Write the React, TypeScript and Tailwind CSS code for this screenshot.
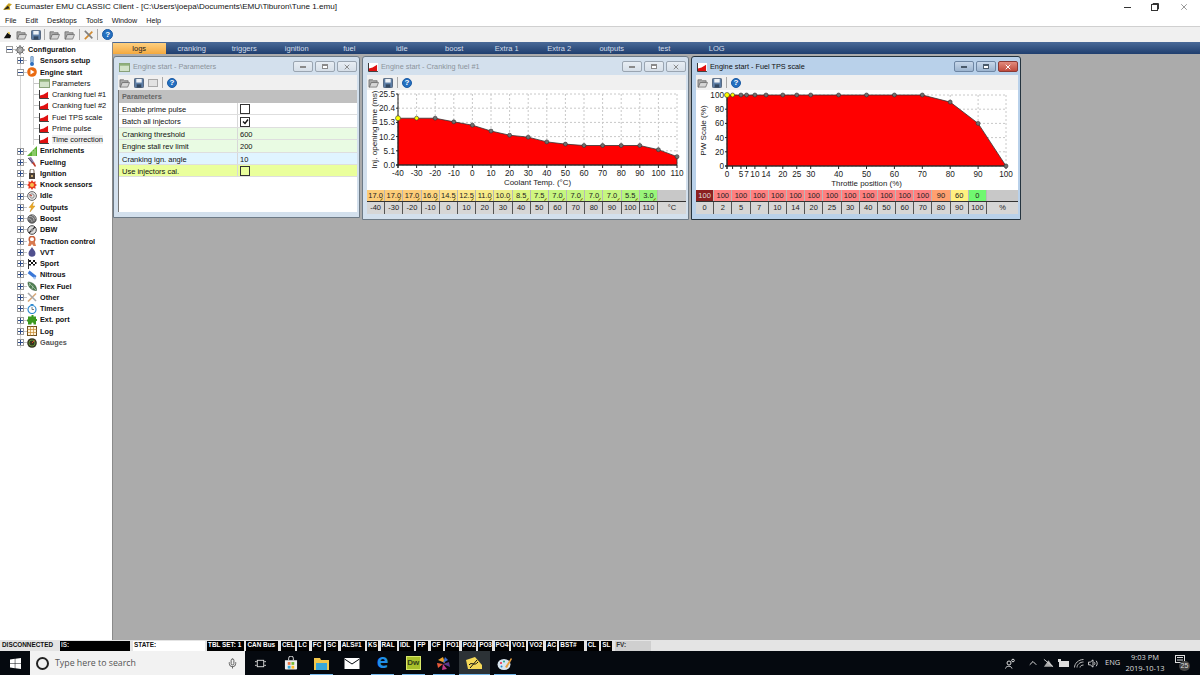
import React from "react";
import { X, ChevronUp, Mic } from "lucide-react";

const F = "font-['Liberation_Sans',Arial,sans-serif]";

function Plus({ open }: { open?: boolean }) {
  return (
    <span className="w-[7px] h-[7px] border border-[#9a9a9a] bg-white flex items-center justify-center shrink-0 relative z-10">
      <span className="absolute w-[5px] h-px bg-[#2a4a8a]" />
      {!open && <span className="absolute h-[5px] w-px bg-[#2a4a8a]" />}
    </span>
  );
}

function Help({ s = 11 }: { s?: number }) {
  return (
    <span style={{ width: s, height: s }} className="rounded-full bg-[#2470c0] border border-[#1c5ba5] text-white flex items-center justify-center text-[8px] font-bold leading-none shrink-0">?</span>
  );
}
function Folder() {
  return (
    <svg width="11" height="10" viewBox="0 0 12 11" className="shrink-0"><path d="M1 2h4l1 1h4v2H4L2 10H1z" fill="#a9a9a9" stroke="#666" strokeWidth=".8"/><path d="M3.500 5H11.500L9.500 10H1.500z" fill="#d6d6d6" stroke="#666" strokeWidth=".8"/></svg>
  );
}
function Disk() {
  return (
    <svg width="10" height="10" viewBox="0 0 11 11" className="shrink-0"><rect x=".5" y=".5" width="10" height="10" rx="1" fill="#5f7fa6" stroke="#4d5f78"/><rect x="2.500" y="1" width="6" height="4" fill="#eef2f6"/><rect x="3" y="7" width="5" height="3.500" fill="#33475f"/></svg>
  );
}
function Sep() {
  return <span className="w-px h-[11px] bg-[#a8a8a8] shrink-0" />;
}
function ChartIco() {
  return (
    <svg width="10" height="9" viewBox="0 0 11 10" className="shrink-0"><rect width="11" height="10" fill="#fff"/><path d="M1 9V6l4-1 5-3v7z" fill="#e01010"/><path d="M.5 0v9.500H11" stroke="#222" fill="none"/></svg>
  );
}
function GridIco() {
  return (
    <svg width="11" height="9" viewBox="0 0 12 10" className="shrink-0"><rect x=".5" y=".5" width="11" height="9" fill="#d2e2c8" stroke="#7f9a6e"/><rect x=".5" y=".5" width="11" height="2.500" fill="#8fb07a"/></svg>
  );
}

const icons: Record<string, React.ReactNode> = {
  Configuration: <><circle cx="5" cy="5" r="3.200" fill="#b8b8b8" stroke="#666"/><circle cx="5" cy="5" r="1.200" fill="#fff" stroke="#666" strokeWidth=".6"/><path d="M5 0v1.800M5 8.200V10M0 5h1.800M8.200 5H10M1.500 1.500l1.200 1.200M7.300 7.300l1.200 1.200M8.500 1.500L7.300 2.700M2.700 7.300L1.500 8.500" stroke="#666"/></>,
  "Sensors setup": <><rect x="3.700" y="0" width="2.600" height="7" rx="1.300" fill="#9fc2e6" stroke="#4d78a8" strokeWidth=".6"/><circle cx="5" cy="8" r="2" fill="#2e6fc0"/></>,
  "Engine start": <><circle cx="5" cy="5" r="4.800" fill="#ea6a10"/><path d="M3.500 2.500L7.500 5l-4 2.500z" fill="#fff"/></>,
  Enrichments: <><path d="M0 10L10 0v10z" fill="#58b030"/><path d="M6 10V5M8 10V3" stroke="#d8f0c0" strokeWidth=".8"/></>,
  Fueling: <><path d="M1 1l3-1 3 5-2 2z" fill="#8a7aa8"/><path d="M5 6l2-1 2 4-1 1z" fill="#c03a2a"/><path d="M1 1l5 5" stroke="#444" strokeWidth=".7"/></>,
  Ignition: <><rect x="2" y="4" width="6" height="6" fill="#4a4038"/><path d="M3 4V2a2 2 0 0 1 4 0v2" fill="none" stroke="#8a7a6a" strokeWidth="1.200"/><rect x="4" y="6" width="2" height="2" fill="#c8a870"/></>,
  "Knock sensors": <><path d="M5 0l1.300 2 2.300-.7-.3 2.400L10 5l-1.700 1.300.3 2.400-2.300-.7L5 10 3.700 8l-2.300.7.3-2.400L0 5l1.700-1.300-.3-2.400 2.300.7z" fill="#e83a20"/><circle cx="5" cy="5" r="2" fill="#f8c050"/></>,
  Idle: <><circle cx="5" cy="5" r="4.400" fill="#e8e8e8" stroke="#666"/><circle cx="5" cy="5" r="2.200" fill="none" stroke="#888"/><path d="M5 5L2.500 3.500" stroke="#c03020"/></>,
  Outputs: <path d="M6.500 0L2 5.500h2.500L3 10l5-6H5.500z" fill="#efa820" stroke="#b88010" strokeWidth=".4"/>,
  Boost: <><circle cx="5" cy="5" r="4.300" fill="#6a6a6a" stroke="#333" strokeWidth=".6"/><path d="M5 1a4 4 0 0 1 3.500 4M2 2.500A4 4 0 0 1 7 7M1 5a3 3 0 0 1 4 3" fill="none" stroke="#ccc" strokeWidth=".7"/></>,
  DBW: <><circle cx="5" cy="5" r="4.300" fill="#e0e0e0" stroke="#444"/><path d="M2 8l6-6" stroke="#333" strokeWidth="1.300"/><circle cx="5" cy="5" r="1.500" fill="#888"/></>,
  "Traction control": <><circle cx="5" cy="3.200" r="2.800" fill="none" stroke="#c8603a" strokeWidth="1.500"/><path d="M2.500 5L1 10h2.500L5 8l1.500 2H9L7.500 5z" fill="#d87a50"/></>,
  VVT: <path d="M5 0c.8 2 3.500 3.800 3.500 6.300a3.500 3.500 0 0 1-7 0C1.500 3.800 4.200 2 5 0z" fill="#50508e"/>,
  Sport: <><path d="M1.500 0v10" stroke="#333"/><rect x="2" y="1" width="7.500" height="5.500" fill="#fff"/><path d="M2 1h2v2H2zM6 1h2v2H6zM4 3h2v2H4zM8 3h1.500v2H8zM2 5h2v1.500H2zM6 5h2v1.500H6z" fill="#111"/></>,
  Nitrous: <><path d="M2.500 0.500l7 5.500-1.800 2.800-7-5.500z" fill="#3a78d8"/><path d="M7 6.500l2 1.500-1 1.800-2-1.500z" fill="#a8c8f0"/></>,
  "Flex Fuel": <><path d="M1 1c5 0 9 4 8.500 8.500C5 10 .5 6 1 1z" fill="#4e8050" stroke="#2a4a2e" strokeWidth=".5"/><path d="M1.500 1.500l7.500 7.500M3 2l-.5 3M6 4.500L5 8" stroke="#c8d8c8" strokeWidth=".6"/></>,
  Other: <><path d="M1 9.500l8-8" stroke="#d8a878" strokeWidth="1.600"/><path d="M1 1l8 8" stroke="#a8a8a8" strokeWidth="1.600"/></>,
  Timers: <><circle cx="5" cy="5.500" r="4" fill="#fff" stroke="#2e8ad0" strokeWidth="1.200"/><rect x="3.500" y="0" width="3" height="1" fill="#2e8ad0"/><path d="M5 5.500V3M5 5.500h2" stroke="#444" strokeWidth=".7"/></>,
  "Ext. port": <path d="M3.500 1.500h1V.5a1 1 0 0 1 2 0v1h2.500v2.500h1v2h-1v3.500H6.500v-1a1 1 0 0 0-2 0v1H1V6.500H0v-2h1v-3z" fill="#3c9a20"/>,
  Log: <><rect x=".5" y=".5" width="9" height="9" fill="#fff3d8" stroke="#705020"/><path d="M.5 3.500h9M.5 6.500h9M3.500.5v9M6.500.5v9" stroke="#c88a30" strokeWidth=".7"/></>,
  Gauges: <><circle cx="5" cy="5" r="4.800" fill="#35351f"/><circle cx="5" cy="5" r="3" fill="none" stroke="#70b040" strokeWidth=".7"/><path d="M5 5l2.500-2.500" stroke="#e04020"/></>,
};

function TreeIcon({ label }: { label: string }) {
  return <svg width="10" height="10" viewBox="0 0 10 10" className="shrink-0">{icons[label]}</svg>;
}

const treeTop = ["Enrichments", "Fueling", "Ignition", "Knock sensors", "Idle", "Outputs", "Boost", "DBW", "Traction control", "VVT", "Sport", "Nitrous", "Flex Fuel", "Other", "Timers", "Ext. port", "Log", "Gauges"];

function TopRow({ label, open, depth = 1, grey }: { label: string; open?: boolean; depth?: number; grey?: boolean }) {
  return (
    <div className="h-[11.270px] flex items-center relative" style={{ paddingLeft: depth === 0 ? 6 : 17 }}>
      {depth === 1 && <span className="absolute left-[20px] top-0 bottom-0 w-px bg-[#d4d4d4]" />}
      <Plus open={open} />
      <span className="h-px bg-[#c4c4c4] shrink-0" style={{ width: depth === 0 ? 2 : 3 }} />
      <TreeIcon label={label} />
      <span className={`ml-[3px] text-[7.300px] font-bold whitespace-nowrap leading-none ${grey ? "text-[#555]" : "text-[#111]"}`}>{label}</span>
    </div>
  );
}
function SubRow({ label, sel, grid }: { label: string; sel?: boolean; grid?: boolean }) {
  return (
    <div className="h-[11.270px] flex items-center pl-[33px] relative">
      <span className="absolute left-[20px] top-0 bottom-0 w-px bg-[#d4d4d4]" />
      <span className="absolute left-[33px] top-0 bottom-0 w-px bg-[#d4d4d4]" />
      <span className="w-[6px] h-px bg-[#c4c4c4] shrink-0" />
      <span className="w-[13px] shrink-0 flex">{grid ? <GridIco /> : <ChartIco />}</span>
      <span className={`text-[7.450px] leading-none py-[1px] whitespace-nowrap text-[#111] ${sel ? "bg-[#f0f0f0]" : ""}`}>{label}</span>
    </div>
  );
}

function Tree() {
  return (
    <div className="w-[113px] shrink-0 bg-white border-r border-[#8a8a8a] pt-[2px] overflow-hidden">
      <TopRow label="Configuration" open depth={0} />
      <TopRow label="Sensors setup" />
      <TopRow label="Engine start" open />
      <SubRow label="Parameters" grid />
      <SubRow label="Cranking fuel #1" />
      <SubRow label="Cranking fuel #2" />
      <SubRow label="Fuel TPS scale" />
      <SubRow label="Prime pulse" />
      <SubRow label="Time correction" sel />
      {treeTop.map((t) => (
        <TopRow key={t} label={t} grey={t === "Gauges"} />
      ))}
    </div>
  );
}

const tabs = ["logs", "cranking", "triggers", "ignition", "fuel", "idle", "boost", "Extra 1", "Extra 2", "outputs", "test", "LOG"];

function WinBtn({ kind, active }: { kind: "min" | "max" | "close"; active?: boolean }) {
  const bg = active
    ? kind === "close"
      ? "bg-gradient-to-b from-[#e28a7c] to-[#c04a3c] border-[#8a3a35]"
      : "bg-gradient-to-b from-[#c8d8ea] to-[#9db5d0] border-[#6e86a3]"
    : "bg-gradient-to-b from-[#e8eef4] to-[#d6dfe8] border-[#9aa5b1]";
  const c = active ? "#fff" : "#8a8a8a";
  const g = active ? "border-[#4a5a6a]" : "border-[#8a8a8a]";
  return (
    <span className={`w-[20px] h-[11px] border rounded-[2px] flex items-center justify-center ${bg}`}>
      {kind === "min" && <span className={`w-[6px] h-[2px] border bg-white ${g}`} />}
      {kind === "max" && <span className={`w-[6px] h-[5px] border border-t-2 bg-white ${g}`} />}
      {kind === "close" && <X size={8} strokeWidth={3} color={c} />}
    </span>
  );
}

function Win({ title, w, h, active, icon, children, extra }: { title: string; w: string; h: string; active?: boolean; icon: React.ReactNode; children: React.ReactNode; extra?: boolean }) {
  return (
    <div className={`${w} ${h} shrink-0 rounded-t-[3px] border ${active ? "border-[#25343f] bg-[#b9d1ea]" : "border-[#6d7a86] bg-[#d3e0ed]"} flex flex-col pl-[4px] pr-[2px] pb-[5px]`}>
      <div className="h-[18px] flex items-center pl-[1px] pt-[2px] shrink-0">
        {icon}
        <span className={`ml-[3px] text-[7.300px] leading-none whitespace-nowrap ${active ? "text-[#111]" : "text-[#8c949b]"}`}>{title}</span>
        <span className="flex-1" />
        <span className="flex gap-[2px] -mt-[1px]">
          <WinBtn kind="min" active={active} />
          <WinBtn kind="max" active={active} />
          <WinBtn kind="close" active={active} />
        </span>
      </div>
      <div className="h-[15px] bg-[#f0f0f0] flex items-center gap-[4px] pl-[1px] shrink-0">
        <Folder />
        <Disk />
        {extra && <span className="w-[10px] h-[8px] border border-[#a8a8a8] bg-[#e2e2e2]" />}
        <Sep />
        <Help s={10} />
      </div>
      <div className="flex-1 bg-white flex flex-col min-h-0 overflow-hidden">{children}</div>
    </div>
  );
}

const params: { k: string; v?: string; check?: boolean; checked?: boolean; bg: string }[] = [
  { k: "Enable prime pulse", check: true, bg: "bg-white" },
  { k: "Batch all injectors", check: true, checked: true, bg: "bg-white" },
  { k: "Cranking threshold", v: "600", bg: "bg-[#e9fbe3]" },
  { k: "Engine stall rev limit", v: "200", bg: "bg-[#e9fbe3]" },
  { k: "Cranking ign. angle", v: "10", bg: "bg-[#e0f4ff]" },
  { k: "Use injectors cal.", check: true, bg: "bg-[#eaff9c]" },
];

function ParamsBody() {
  return (
    <div className="flex flex-col border-l border-[#777] flex-1">
      <div className="h-[13px] bg-[#c0c0c0] flex items-center pl-[3px] pt-[1px] text-[7.300px] font-bold text-[#666] leading-none">Parameters</div>
      {params.map((p) => (
        <div key={p.k} className={`h-[12.400px] flex items-center ${p.bg} border-b border-[#dedede] text-[7.500px] leading-none text-[#111]`}>
          <span className="w-[119px] pl-[3px] pt-[2px] border-r border-[#d8d8d8] h-full flex items-center whitespace-nowrap">{p.k}</span>
          <span className="pl-[2px] pt-[1px] flex items-center">
            {p.check ? (
              <span className="w-[10px] h-[10px] border border-[#333] flex items-center justify-center">
                {p.checked && (
                  <svg width="7" height="7" viewBox="0 0 7 7"><path d="M1 3.500l2 2 3-4" stroke="#111" strokeWidth="1.400" fill="none" /></svg>
                )}
              </span>
            ) : (
              <span className="pt-[1px]">{p.v}</span>
            )}
          </span>
        </div>
      ))}
    </div>
  );
}

type ChartCfg = {
  width: number;
  height: number;
  x0: number;
  x1: number;
  y0: number;
  y1: number;
  xLabel: string;
  yLabel: string;
  yTicks: string[];
  pts: [number, number][];
  xMax: number;
  yMax: number;
  xMin: number;
  xTicks: number[];
  xGrid: number[];
  yellow: number[];
  large: number;
};

function Chart({ c }: { c: ChartCfg }) {
  const px = (x: number) => c.x0 + ((x - c.xMin) / (c.xMax - c.xMin)) * (c.x1 - c.x0);
  const py = (y: number) => c.y1 - (y / c.yMax) * (c.y1 - c.y0);
  const d = `M${c.x0} ${c.y1} ` + c.pts.map(([x, y]) => `L${px(x)} ${py(y)}`).join(" ") + ` L${c.x1} ${c.y1} Z`;
  return (
    <svg width={c.width} height={c.height} viewBox={`0 0 ${c.width} ${c.height}`} className="block shrink-0">
      {c.xGrid.map((x) => (
        <line key={x} x1={px(x)} x2={px(x)} y1={c.y0} y2={c.y1} stroke="#c8c8c8" strokeDasharray="2 2" />
      ))}
      {c.yTicks.map((_, i) => {
        const y = c.y1 - (i / (c.yTicks.length - 1)) * (c.y1 - c.y0);
        return <line key={i} x1={c.x0} x2={c.x1} y1={y} y2={y} stroke="#c8c8c8" strokeDasharray="2 2" />;
      })}
      <path d={d} fill="#ff0000" stroke="#333" strokeWidth=".8" />
      <line x1={c.x0} x2={c.x0} y1={c.y0} y2={c.y1 + 3} stroke="#222" />
      <line x1={c.x0 - 2} x2={c.x1} y1={c.y1} y2={c.y1} stroke="#222" />
      {c.yTicks.map((t, i) => {
        const y = c.y1 - (i / (c.yTicks.length - 1)) * (c.y1 - c.y0);
        return (
          <g key={t}>
            <line x1={c.x0 - 2} x2={c.x0} y1={y} y2={y} stroke="#222" />
            <text x={c.x0 - 3} y={y + 3} textAnchor="end" fontSize="8.200" fontFamily="Liberation Sans" fill="#222">{t}</text>
          </g>
        );
      })}
      {c.pts.map(([x]) => (
        <line key={x} x1={px(x)} x2={px(x)} y1={c.y1} y2={c.y1 + 3} stroke="#222" />
      ))}
      {c.xTicks.map((x) => (
        <text key={x} x={px(x)} y={c.y1 + 11} textAnchor="middle" fontSize="8.200" fontFamily="Liberation Sans" fill="#222">{x}</text>
      ))}
      <text x={(c.x0 + c.x1) / 2} y={c.y1 + 20} textAnchor="middle" fontSize="7.900" fontFamily="Liberation Sans" fill="#222">{c.xLabel}</text>
      <text transform={`translate(10 ${(c.y0 + c.y1) / 2}) rotate(-90)`} textAnchor="middle" fontSize="8.100" fontFamily="Liberation Sans" fill="#222">{c.yLabel}</text>
      {c.pts.map(([x, y], i) => (
        <circle key={i} cx={px(x)} cy={py(y)} r={i === c.large ? 2.500 : 2} fill={c.yellow.includes(i) ? "#ffff00" : "#707070"} stroke="#333" strokeWidth=".6" />
      ))}
    </svg>
  );
}

function Table({ vals, heads, unit, colors, firstDark, marks }: { vals: string[]; heads: string[]; unit: string; colors: string[]; firstDark?: boolean; marks?: boolean }) {
  return (
    <div className="flex flex-col text-[7.500px] leading-none text-[#222] bg-[#c8c8c8]">
      <div className="flex h-[11px] bg-[#c8c8c8]">
        {vals.map((v, i) => (
          <span key={i} style={{ background: colors[i] }} className={`w-[18.200px] shrink-0 flex items-center justify-center border-r border-[#b8b8b8] relative ${firstDark && i === 0 ? "text-[#ddd]" : ""}`}>
            {v}
            {marks && <span className="absolute right-[1px] bottom-[1px] w-[3px] h-[1px] bg-[#8a7a20] -rotate-45" />}
          </span>
        ))}
      </div>
      <div className="flex h-[13px] border-t border-[#333] bg-[#d6d6d6]">
        {heads.map((v, i) => (
          <span key={i} className="w-[18.200px] shrink-0 flex items-center justify-center border-r border-[#555]">{v}</span>
        ))}
        <span className="flex-1 flex items-center justify-center">{unit}</span>
      </div>
    </div>
  );
}

const crankPts: [number, number][] = [
  [-40, 16.8], [-30, 16.8], [-20, 16.8], [-10, 15.5], [0, 14.3], [10, 12.2], [20, 10.700], [30, 10], [40, 8.300], [50, 7.500], [60, 7], [70, 7], [80, 7], [90, 7], [100, 5.500], [110, 3],
];
const crank: ChartCfg = {
  width: 319, height: 100, x0: 31, x1: 310, y0: 4, y1: 75,
  xLabel: "Coolant Temp. (°C)", yLabel: "Inj. opening time (ms)",
  yTicks: ["0.0", "5.1", "10.2", "15.3", "20.4", "25.5"],
  pts: crankPts, xMin: -40, xMax: 110, yMax: 25.500,
  xTicks: crankPts.map((p) => p[0]), xGrid: crankPts.map((p) => p[0]), yellow: [0, 1], large: 0,
};
const tpsX = [0, 2, 5, 7, 10, 14, 20, 25, 30, 40, 50, 60, 70, 80, 90, 100];
const tpsY = [100, 100, 100, 100, 100, 100, 100, 100, 100, 100, 100, 100, 100, 90, 60, 0];
const tps: ChartCfg = {
  width: 322, height: 100, x0: 31, x1: 310, y0: 5, y1: 76,
  xLabel: "Throttle position (%)", yLabel: "PW Scale (%)",
  yTicks: ["0", "20", "40", "60", "80", "100"],
  pts: tpsX.map((x, i) => [x, tpsY[i]] as [number, number]), xMin: 0, xMax: 100, yMax: 100,
  xTicks: [0, 5, 7, 10, 14, 20, 25, 30, 40, 50, 60, 70, 80, 90, 100], xGrid: [0, 10, 20, 30, 40, 50, 60, 70, 80, 90, 100], yellow: [0, 1], large: 0,
};

const statusChips: [string, number][] = [["TBL SET: 1", 37], ["CAN Bus", 32], ["CEL", 14], ["LC", 12], ["FC", 12], ["SC", 12], ["ALS#1", 24], ["KS", 11], ["RAL", 16], ["IDL", 15], ["FP", 12], ["CF", 12], ["PO1", 14], ["PO2", 14], ["PO3", 14], ["PO4", 14], ["VO1", 15], ["VO2", 15], ["AC", 11], ["BST#", 25], ["CL", 12], ["SL", 11]];

function StatusBar() {
  return (
    <div className={`h-[11px] shrink-0 bg-[#e4e4e4] flex items-center text-[6.400px] font-bold leading-none ${F} whitespace-nowrap`}>
      <span className="w-[60px] pl-[2px] text-[#111]">DISCONNECTED</span>
      <span className="w-[70px] bg-black text-[#ddd] h-[10px] flex items-center pl-[1px]">IS:</span>
      <span className="w-[72px] ml-[3px] bg-white text-[#111] h-[10px] flex items-center pl-[1px]">STATE:</span>
      <span className="ml-[2px] flex gap-[2.450px] h-[10px]">
        {statusChips.map(([s, w]) => (
          <span key={s} style={{ width: w }} className="bg-black text-white h-full flex items-center pl-[1px] overflow-hidden">{s}</span>
        ))}
      </span>
      <span className="ml-[3px] text-[#333] bg-[#cfcfcf] w-[36px] h-[10px] flex items-center pl-[1px]">FV:</span>
    </div>
  );
}

function TaskIcon({ children, active, line }: { children: React.ReactNode; active?: boolean; line?: boolean }) {
  return (
    <span className={`w-[30.600px] h-full flex items-center justify-center relative ${active ? "bg-[#2c3236]" : ""}`}>
      {children}
      {line && <span className={`absolute bottom-0 h-[1px] bg-[#76b9ed] ${active ? "left-0 right-0" : "left-[4px] right-[4px]"}`} />}
    </span>
  );
}

function Taskbar() {
  return (
    <div className={`h-[24px] shrink-0 bg-[#05090f] flex items-center text-white ${F}`}>
      <span className="w-[30px] h-full flex items-center justify-center">
        <svg width="11" height="11" viewBox="0 0 11 11" fill="#fff"><path d="M0 1.500l4.800-.7v4.400H0zM5.300.7L11 0v5.200H5.300zM0 5.800h4.800v4.400L0 9.500zM5.300 5.800H11V11l-5.700-.8z"/></svg>
      </span>
      <span className="w-[215px] h-full bg-[#f2f2f2] flex items-center pl-[6px] text-[#555] text-[8.800px]">
        <span className="w-[13px] h-[13px] rounded-full border-2 border-[#222] mr-[6px]" />
        <span className="font-['Open_Sans',sans-serif] pt-[1px]">Type here to search</span>
        <Mic size={11} className="ml-auto mr-[7px] text-[#555]" />
      </span>
      <span className="flex h-full items-center">
        <TaskIcon>
          <svg width="11" height="11" viewBox="0 0 12 12" fill="none" stroke="#ddd"><rect x="2.500" y="2.500" width="7" height="7"/><path d="M0 4h2M0 8h2M10 4h2M10 8h2"/></svg>
        </TaskIcon>
        <TaskIcon>
          <svg width="14" height="14" viewBox="0 0 15 14"><path d="M1 4h13v9a1 1 0 0 1-1 1H2a1 1 0 0 1-1-1z" fill="#eee"/><path d="M5 4V2a2 2 0 0 1 5 0v2" stroke="#eee" fill="none"/><rect x="4" y="6" width="3" height="3" fill="#e74"/><rect x="8" y="6" width="3" height="3" fill="#7b3"/><rect x="4" y="10" width="3" height="3" fill="#3ad"/><rect x="8" y="10" width="3" height="3" fill="#fb2"/></svg>
        </TaskIcon>
        <TaskIcon line>
          <svg width="15" height="13" viewBox="0 0 15 13"><path d="M0 1h6l1 2h8v10H0z" fill="#f3c74b"/><rect x="2" y="6" width="11" height="7" fill="#3aa7d8"/></svg>
        </TaskIcon>
        <TaskIcon>
          <svg width="16" height="11" viewBox="0 0 15 11"><rect width="15" height="11" fill="#fff"/><path d="M0 1l7.500 5L15 1" stroke="#05090f" fill="none"/></svg>
        </TaskIcon>
        <TaskIcon line>
          <span className="text-[#1f8fe8] text-[20px] font-bold leading-none font-['Open_Sans',sans-serif] -mt-[4px]">e</span>
        </TaskIcon>
        <TaskIcon line>
          <span className="w-[15px] h-[14px] bg-[#a8c02a] text-[#33401a] text-[8px] font-bold flex items-center justify-center leading-none border border-[#d8e86a]">Dw</span>
        </TaskIcon>
        <TaskIcon line>
          <svg width="15" height="15" viewBox="0 0 15 15"><path d="M2 4l5-3 2 6z" fill="#e8a030"/><path d="M9 1l3 3-5 3z" fill="#3a6ac8"/><path d="M13 6l1 5-7-3z" fill="#5a3a8a"/><path d="M11 13l-5 1 1-6z" fill="#c03a8a"/><path d="M2 12L1 7l6 1z" fill="#e85a3a"/></svg>
        </TaskIcon>
        <TaskIcon active line>
          <svg width="16" height="12" viewBox="0 0 16 12"><path d="M0 3 L9 0 L16 8 V12 H2z" fill="#f4d858"/><path d="M3 8c3-4 5 2 9-3M4 11l7-8" stroke="#111" fill="none"/></svg>
        </TaskIcon>
        <TaskIcon line>
          <svg width="16" height="15" viewBox="0 0 16 15"><ellipse cx="7" cy="8.500" rx="6.500" ry="5.500" fill="#d8e4ee"/><circle cx="4" cy="7" r="1" fill="#e24"/><circle cx="7" cy="5.500" r="1" fill="#2a8"/><circle cx="4.500" cy="10.500" r="1" fill="#28c"/><path d="M8 11l6-9 1 1-5 9z" fill="#e8a040"/></svg>
        </TaskIcon>
      </span>
      <span className="flex-1" />
      <span className="flex items-center text-[#ddd] h-full text-[7.500px]">
        <svg width="11" height="11" viewBox="0 0 11 11" fill="none" stroke="#ddd" className="mr-[11px]"><circle cx="4" cy="5" r="2"/><path d="M.5 10.500c.5-3 6-3 6.500 0"/><circle cx="8" cy="2.500" r="1.300"/></svg>
        <ChevronUp size={12} className="mr-[4px]" />
        <svg width="11" height="10" viewBox="0 0 12 10" className="mr-[4px]"><path d="M1 9L6 2l5 7z" fill="#aaa"/><path d="M1 1l10 8" stroke="#ddd"/></svg>
        <svg width="11" height="9" viewBox="0 0 11 9" className="mr-[5px]"><rect x="1" y="2" width="10" height="6" fill="#ddd"/><rect width="3" height="3" fill="#ddd"/></svg>
        <svg width="10" height="9" viewBox="0 0 10 9" fill="none" stroke="#bbb" className="mr-[4px]"><path d="M.5 8.500c0-4 4-8 9-8M3 8.500c0-3 3-5.500 6.500-5.500M6 8.500c0-1 1-2.500 3.500-2.500"/></svg>
        <svg width="10" height="9" viewBox="0 0 11 9" fill="none" stroke="#ddd" className="mr-[7px]"><path d="M.5 3v3h2l3 2.500V.5l-3 2.500zM7 3c.8 1 .8 2 0 3M9 1.500c1.500 2 1.500 4 0 6"/></svg>
        <span className="w-[13px] mr-[4px] font-['Open_Sans',sans-serif] whitespace-nowrap">ENG</span>
        <span className="w-[46px] flex flex-col items-center leading-[11px] font-['Open_Sans',sans-serif] mr-[7px]">
          <span>9:03 PM</span>
          <span>2019-10-13</span>
        </span>
        <span className="w-[15px] h-[16px] relative mr-[10px] flex items-start">
          <svg width="10" height="9" viewBox="0 0 10 9" fill="none" stroke="#ddd"><rect x=".5" y=".5" width="9" height="7"/><path d="M2 2.500h6M2 5h6"/></svg>
          <span className="absolute right-0 bottom-0 w-[11px] h-[10px] rounded-full bg-[#444] text-[7px] leading-[10px] text-center">25</span>
        </span>
      </span>
    </div>
  );
}

export default function App() {
  return (
    <div className={`w-[1200px] h-[675px] overflow-hidden flex flex-col bg-[#ababab] ${F}`}>
      <div className="h-[14px] bg-white shrink-0 flex items-center pl-[3px] text-[8.100px] text-[#111] leading-none">
        <svg width="9" height="8" viewBox="0 0 11 9" className="shrink-0"><path d="M0 8l4-5 3-3 4 1-3 3 1 4H2z" fill="#c9a21c"/><path d="M1 8l5-5 2 3z" fill="#222"/></svg>
        <span className="ml-[3px] pt-[1px] whitespace-nowrap">Ecumaster EMU CLASSIC Client - [C:\Users\joepa\Documents\EMU\Tiburon\Tune 1.emu]</span>
        <span className="flex-1" />
        <span className="flex items-center text-[#333]">
          <span className="w-[27px] flex justify-center"><span className="w-[7px] h-px bg-[#333]" /></span>
          <span className="w-[27px] flex justify-center">
            <svg width="8" height="8" viewBox="0 0 8 8" fill="none" stroke="#333"><rect x=".5" y="1.500" width="6" height="6" fill="#fff"/><path d="M2 1.500V.5h5.500V6h-1"/></svg>
          </span>
          <span className="w-[32px] flex justify-center"><X size={10} strokeWidth={1.200} /></span>
        </span>
      </div>
      <div className="h-[13px] bg-white shrink-0 flex items-center pl-[5px] pt-[1px] gap-[9px] text-[7.200px] text-[#111] leading-none border-b border-[#d0d0d0]">
        {["File", "Edit", "Desktops", "Tools", "Window", "Help"].map((m) => <span key={m}>{m}</span>)}
      </div>
      <div className="h-[15px] bg-[#f0f0f0] shrink-0 flex items-center pl-[2px] gap-[3.800px]">
        <svg width="10" height="10" viewBox="0 0 11 11" className="shrink-0"><path d="M2 9l4-6 4 3-1 3z" fill="#111"/><path d="M6 2l3 1-1 2z" fill="#e8c020"/></svg>
        <Folder />
        <Disk />
        <Sep />
        <Folder />
        <Folder />
        <Sep />
        <svg width="10" height="10" viewBox="0 0 12 12" className="shrink-0"><path d="M1 11l9-9" stroke="#d08a30" strokeWidth="2"/><path d="M1 1l9 9" stroke="#808080" strokeWidth="2"/></svg>
        <Sep />
        <Help />
      </div>
      <div className="flex-1 flex min-h-0">
        <Tree />
        <div className="flex-1 flex flex-col min-w-0">
          <div className="h-[12px] pt-[1px] bg-gradient-to-b from-[#4a6a98] to-[#1f3e6e] shrink-0 flex items-center text-[7.500px] text-[#d4deea] leading-none">
            {tabs.map((t, i) => (
              <span key={t} className={`w-[52.500px] h-full flex items-center justify-center ${i === 0 ? "bg-gradient-to-b from-[#fdd080] to-[#f4a93c] text-[#222] -mt-[1px] h-[12px] pt-[1px]" : ""}`}>{t}</span>
            ))}
          </div>
          <div className="flex items-start pt-[2px] gap-[2px]">
            <Win title="Engine start - Parameters" w="w-[247px]" h="h-[162px]" icon={<GridIco />} extra>
              <ParamsBody />
            </Win>
            <Win title="Engine start - Cranking fuel #1" w="w-[327px]" h="h-[164px]" icon={<ChartIco />}>
              <Chart c={crank} />
              <Table
                marks
                vals={["17.0", "17.0", "17.0", "16.0", "14.5", "12.5", "11.0", "10.0", "8.5", "7.5", "7.0", "7.0", "7.0", "7.0", "5.5", "3.0"]}
                heads={crankPts.map((p) => String(p[0]))}
                unit="°C"
                colors={["#fdcc78", "#fdcc78", "#fdcc78", "#fdd680", "#fee18a", "#fee88a", "#f8ec88", "#eeee88", "#dcf480", "#d0f680", "#c6f680", "#c6f680", "#c6f680", "#c6f680", "#b4f67e", "#98f57a"]}
              />
            </Win>
            <Win title="Engine start - Fuel TPS scale" w="w-[330px]" h="h-[164px]" icon={<ChartIco />} active>
              <Chart c={tps} />
              <Table
                vals={tpsY.map(String)}
                heads={tpsX.map(String)}
                unit="%"
                firstDark
                colors={["#8c2020", ...Array(12).fill("#ff8080"), "#ffa070", "#fff080", "#70f870"]}
              />
            </Win>
          </div>
        </div>
      </div>
      <StatusBar />
      <Taskbar />
    </div>
  );
}
